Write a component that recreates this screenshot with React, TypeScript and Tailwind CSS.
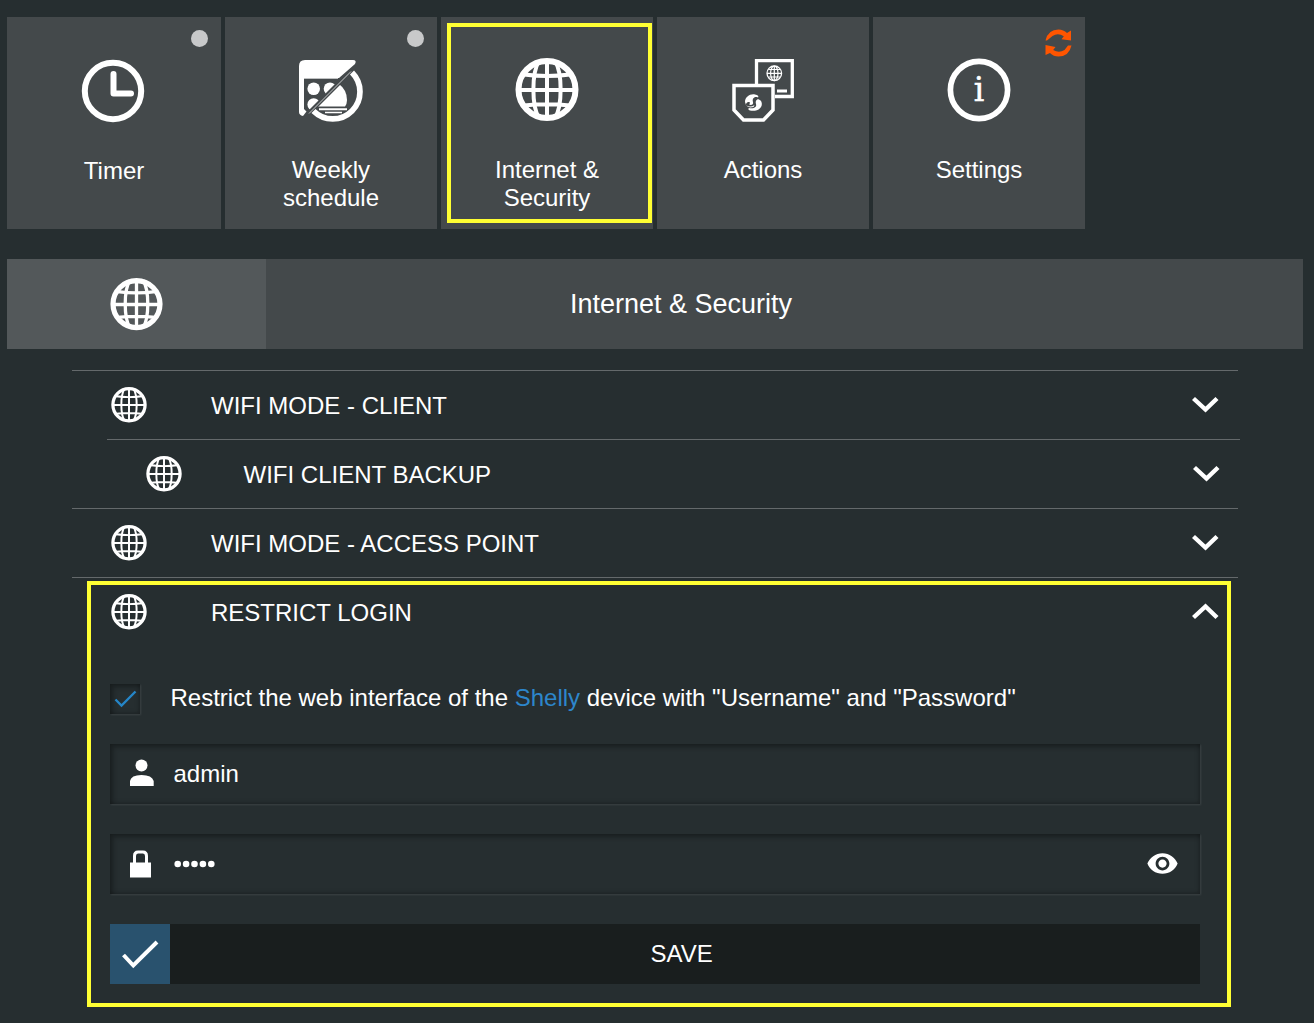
import type { ReactNode } from "react";
import { MdVisibility } from "react-icons/md";

function Globe({ size, ring = 6, line = 4 }: { size: number; ring?: number; line?: number }) {
  return (
    <svg width={size} height={size} viewBox="0 0 64 64" fill="none" stroke="white" className="shrink-0">
      <circle cx="32" cy="31.500" r={31.5 - ring / 2} strokeWidth={ring} />
      <path d="M32 3V60M3 32H61M9 16.500Q32 19.500 55 16.500M9 47.500Q32 45 55 47.500" strokeWidth={line} />
      <path d="M24 3C16.500 15 16.500 48 24 60M40 3C47.500 15 47.500 48 40 60" strokeWidth={line} />
    </svg>
  );
}

function Clock() {
  return (
    <svg width="64" height="64" viewBox="0 0 64 64" fill="none" stroke="white" strokeWidth="6" className="-ml-[2px]">
      <circle cx="32" cy="32" r="28.2" />
      <path d="M32.500 15V34.500H50" strokeLinecap="round" strokeLinejoin="round" />
    </svg>
  );
}

function Schedule() {
  return (
    <svg width="65" height="62" viewBox="0 0 65 62" fill="white">
      <clipPath id="upper"><path d="M0 0H60L2 58H0Z" /></clipPath>
      <clipPath id="lower"><path d="M65 0V62H0V66L65 1Z" /></clipPath>
      <path d="M0 6Q0 0 6 0H54Q58 0 56 4L40 18H5V49L7.500 51.500L4 56Q0 55 0 52Z" />
      <path d="M5 18.500H39" stroke="#bfc1c2" />
      <g clipPath="url(#upper)">
        <circle cx="14.700" cy="28.700" r="6.300" />
        <circle cx="31" cy="28.700" r="6.300" />
        <circle cx="14.700" cy="44.500" r="6.300" />
      </g>
      <g clipPath="url(#lower)">
        <path d="M16 46.500L40 24Q48 30 48 40Q48 44 46 46.500Z" />
        <path d="M20 49.200H48" stroke="white" strokeWidth="2" />
        <path d="M26 52.500H43" stroke="white" strokeWidth="1.300" />
      </g>
      <path d="M53 12.500A26.800 26.800 0 1 1 14.500 51" fill="none" stroke="white" strokeWidth="5.700" />
      <path d="M52 11.500L10 53.500" stroke="#c4c6c7" strokeWidth="1" />
    </svg>
  );
}

function ActionsIcon() {
  return (
    <svg width="63" height="63" viewBox="0 0 63 63" fill="none" stroke="white">
      <path d="M24.500 25V1.700H60.300V37.500H43" strokeWidth="3.300" />
      <path d="M2 26.500H41V51L31.500 61H11.500L2 51Z" strokeWidth="3.500" />
      <circle cx="42.300" cy="14.300" r="7.300" strokeWidth="1.300" />
      <path d="M42.300 7V22M35 14.300H50M36.500 10.500H48M36.500 18H48" strokeWidth="1.200" />
      <ellipse cx="42.300" cy="14.300" rx="3.700" ry="7.300" strokeWidth="1.200" />
      <path d="M45 32H55" strokeWidth="3" />
      <g fill="white" stroke="none">
        <path d="M13 43C13 38 18 34.500 23 35.500C26 36 27 37.500 26 38.500C22 37 20 40 21 43C22 46 18 47 17 45C19 44 18 42.500 16 43C14 44 14 45 14 46Z" />
        <path d="M29.500 43C31.500 49 25 53 18 51.500C16 51 16 49.500 17 49C22 50 25 48 24 45C23 42 25 39.500 27 40.500Q29.500 41.500 29.500 43Z" />
        <path d="M14 46Q18 49 22.500 46L21.500 48Q16 49.500 14 46Z" />
      </g>
    </svg>
  );
}

function Info() {
  return (
    <svg width="64" height="64" viewBox="0 0 64 64">
      <circle cx="32" cy="32" r="28.600" fill="none" stroke="white" strokeWidth="5.700" />
      <text x="32" y="43" fill="white" stroke="white" strokeWidth="0.500" textAnchor="middle" fontSize="33" fontFamily="DejaVu Serif, serif">i</text>
    </svg>
  );
}

function Refresh() {
  return (
    <svg width="27" height="28" viewBox="0 0 27 28" fill="#ff5500">
      <path d="M0.500 11.500Q3 0.500 13.500 0.500Q18.500 0.500 22 4L26 1.500V11.500L16.500 10.200L18.800 7.200Q13 3.500 7.500 7L2 11.500Z" />
      <path d="M26.500 16.500Q24 27.500 13.500 27.500Q8.500 27.500 5 24L0.500 26V16L10.500 18L8.200 21Q14 24.500 19.500 21L23 16.500Z" />
    </svg>
  );
}

function Chevron({ up = false }: { up?: boolean }) {
  return (
    <svg width="28" height="18" viewBox="0 0 28 18" fill="none" stroke="white" strokeWidth="4.400" className="shrink-0">
      <path d={up ? "M2.500 14.500L14.500 3.500L26 14.500" : "M2.500 2.500L14.500 13.500L26 2.500"} />
    </svg>
  );
}

function Tile({ label, icon, width = "w-[212px]", pad = "pt-[41px]", text = "mt-[34px]", badge }: {
  label: ReactNode; icon: ReactNode; width?: string; pad?: string; text?: string; badge?: ReactNode;
}) {
  return (
    <button className={`relative flex h-[212px] flex-col items-center bg-[#44494b] ${pad} ${width}`}>
      {icon}
      <span className={`text-center leading-7 ${text}`}>{label}</span>
      {badge}
    </button>
  );
}

function Row({ title, nested = false, open = false }: { title: string; nested?: boolean; open?: boolean }) {
  return (
    <div
      className={`flex h-[69px] items-center border-t border-[#64696b] ${
        nested ? "ml-[107px] w-[1133px] pl-[39px] pr-[20px]" : "ml-[72px] w-[1166px] pl-[39px] pr-[19px]"
      }`}
    >
      <Globe size={36} ring={5.8} line={3.5} />
      <span className={`flex-1 pt-[2px] ${nested ? "ml-[61.5px]" : "ml-16"}`}>{title}</span>
      <Chevron up={open} />
    </div>
  );
}

const inset =
  "shadow-[inset_3px_3px_5px_rgba(0,0,0,0.3),inset_-1px_-1px_4px_rgba(0,0,0,0.25),1px_1px_2px_rgba(255,255,255,0.1)]";

export default function App() {
  const dot = <span className="absolute right-[13px] top-[12.5px] size-[17px] rounded-full bg-[#c8c9ca]" />;
  return (
    <main className="h-[1023px] w-[1314px] overflow-hidden bg-[#262e30] pt-[17px] font-['Liberation_Sans',Arial,sans-serif] text-2xl text-white">
      <nav className="ml-[7px] flex gap-1">
        <Tile label="Timer" icon={<Clock />} width="w-[214px]" pad="pt-[42px]" badge={dot} />
        <Tile label={<>Weekly<br />schedule</>} icon={<Schedule />} pad="pt-[43px]" badge={dot} />
        <Tile
          label={<>Internet &amp;<br />Security</>}
          icon={<Globe size={64} />}
          badge={<span className="absolute left-[6px] top-[6px] h-[200px] w-[205px] border-4 border-[#ffff33]" />}
        />
        <Tile label="Actions" icon={<ActionsIcon />} pad="pt-[42px]" />
        <Tile label="Settings" icon={<Info />} badge={<span className="absolute right-[13px] top-[12px]"><Refresh /></span>} />
      </nav>

      <header className="ml-[7px] mt-[30px] flex h-[90px] w-[1296px] bg-[#44494b]">
        <div className="flex w-[259px] items-center justify-center bg-[#53585a]">
          <Globe size={53} ring={6.3} line={4} />
        </div>
        <h1 className="ml-[304px] self-center pt-px text-[27px]">Internet &amp; Security</h1>
      </header>

      <section className="mt-[21px]">
        <Row title="WIFI MODE - CLIENT" />
        <Row title="WIFI CLIENT BACKUP" nested />
        <Row title="WIFI MODE - ACCESS POINT" />
        <div className="relative">
          <Row title="RESTRICT LOGIN" open />
          <form className="ml-[110px] w-[1090px] pt-[38px]">
            <label className="flex h-[30px] items-center">
              <span className={`size-[30px] ${inset}`}>
                <svg width="30" height="30" viewBox="0 0 30 30" fill="none" stroke="#2586c8" strokeWidth="2.300">
                  <path d="M5.500 15.500L11.500 21.500L25.500 7.500" />
                </svg>
              </span>
              <span className="ml-[30.5px] -mt-[2px] whitespace-nowrap">
                Restrict the web interface of the <span className="text-[#2d86cb]">Shelly</span> device with "Username" and "Password"
              </span>
            </label>
            <div className={`mt-[30px] flex h-[60px] items-center pl-5 ${inset}`}>
              <svg width="24" height="28" viewBox="0 0 24 28" fill="white" className="-mt-[2px] shrink-0">
                <circle cx="11.500" cy="6.500" r="6" />
                <path d="M0 27V22Q1 16 11.500 16T23.700 22V27Z" />
              </svg>
              <span className="ml-[19.5px]">admin</span>
            </div>
            <div className={`mt-[30px] flex h-[60px] items-center pl-5 pr-[21px] ${inset}`}>
              <svg width="21" height="28" viewBox="0 0 21 28" className="shrink-0">
                <path d="M4.500 14V6Q4.500 2 8 2H13Q16.500 2 16.500 6V14" fill="none" stroke="white" strokeWidth="3" />
                <path d="M0 12.500H21V27.500H0Z" fill="white" />
              </svg>
              <span className="ml-[23px] flex flex-1">
                <svg width="42" height="8" viewBox="0 0 42 8" fill="white">
                  {[3.7, 12.1, 20.5, 28.9, 37.3].map((x) => (
                    <circle key={x} cx={x} cy="4" r="3.300" />
                  ))}
                </svg>
              </span>
              <MdVisibility size={33} className="-mt-[2px]" />
            </div>
            <button type="button" className="mt-[30px] flex h-[60px] w-full items-center bg-[#191e1e]">
              <span className="size-[60px] bg-[#29526e]">
                <svg width="60" height="60" viewBox="0 0 60 60" fill="none" stroke="white" strokeWidth="4">
                  <path d="M13.500 31L23.300 41.500L47 18" />
                </svg>
              </span>
              <span className="ml-[480.5px]">SAVE</span>
            </button>
          </form>
          <div className="pointer-events-none absolute left-[87px] top-1 h-[426px] w-[1144px] border-4 border-[#ffff33]" />
        </div>
      </section>
    </main>
  );
}
